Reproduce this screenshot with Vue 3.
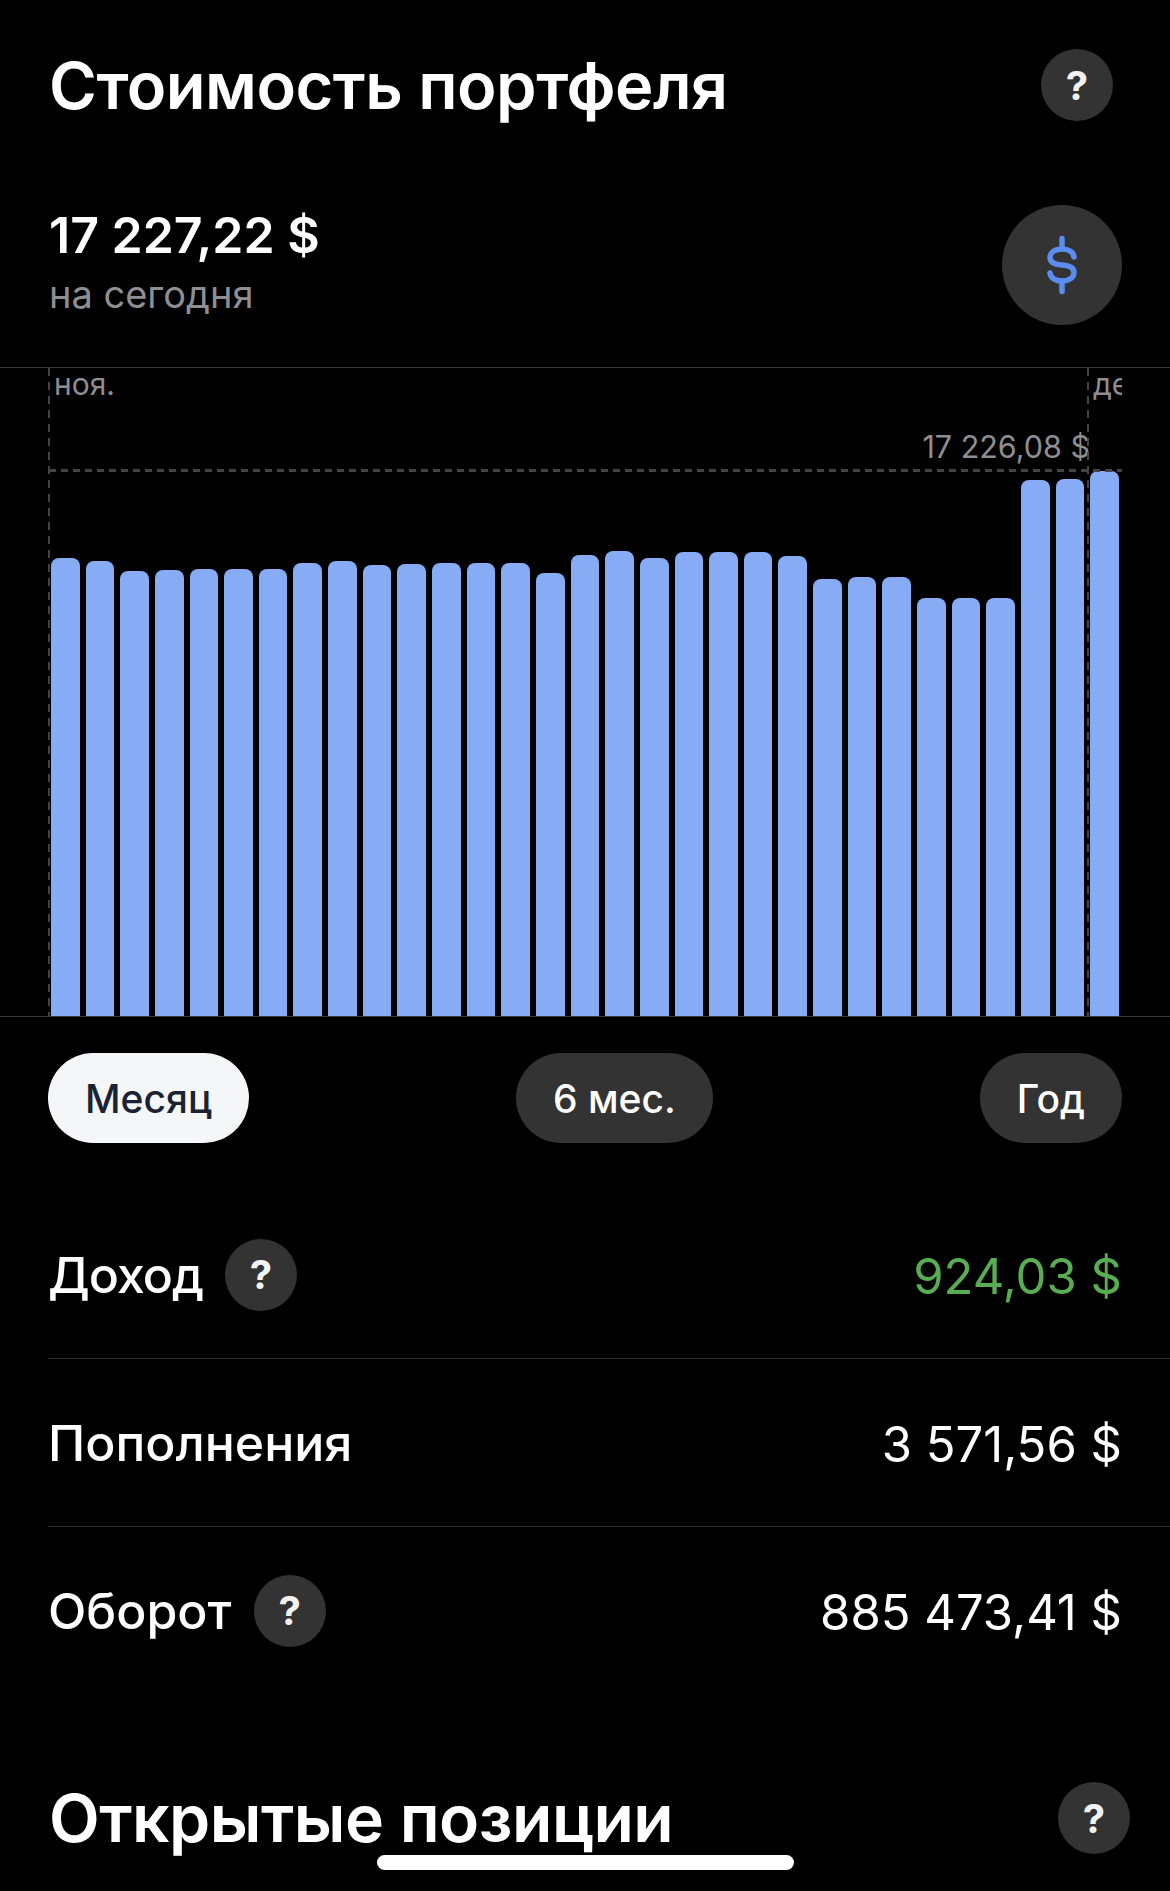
<template>
  <main class="screen">
    <header class="heading">
      <h1>Стоимость портфеля</h1>
      <button class="help">?</button>
    </header>

    <section class="total">
      <div class="total-text">
        <div class="total-value">17 227,22 $</div>
        <div class="total-hint">на сегодня</div>
      </div>
      <div class="currency">
        <svg width="44" height="64" viewBox="0 0 44 64" fill="none" stroke="#5b8def" stroke-width="5.500" stroke-linecap="round">
          <path d="M22 5.500v10M22 48.500v10" />
          <path d="M34 24c-.8-5-5.500-8-12-8-7 0-12 3.500-12 8.500 0 5.500 5 7 12 7.500 7 .5 12 2 12 7.500 0 5-5 8.500-12 8.500-6.500 0-11.200-3-12-8" />
        </svg>
      </div>
    </section>

    <section class="chart">
      <div class="month month-nov">ноя.</div>
      <div class="month month-dec">дек.</div>
      <div class="last-price">17 226,08 $</div>
      <div class="bars">
        <div v-for="(top, i) in barTops" :key="i" class="bar" :style="{ height: 1016 - top + 'px' }"></div>
      </div>
      <div class="guide-v guide-nov"></div>
      <div class="guide-v guide-dec"></div>
      <div class="guide-h"></div>
    </section>

    <nav class="periods">
      <button v-for="period in periods" :key="period" class="period" :class="{ active: period === 'Месяц' }">{{ period }}</button>
    </nav>

    <ul class="stats">
      <li v-for="row in stats" :key="row.label">
        <div class="stat-label">
          <span>{{ row.label }}</span>
          <button v-if="row.help" class="help">?</button>
        </div>
        <div class="stat-value" :class="{ income: row.income }">{{ row.value }}</div>
      </li>
    </ul>

    <header class="heading positions">
      <h1>Открытые позиции</h1>
      <button class="help">?</button>
    </header>

    <div class="home-indicator"></div>
  </main>
</template>

<script setup>
const barTops = [
  558, 561, 571, 570, 569, 569, 569, 563, 561, 565, 564, 563, 563, 563, 573, 555,
  551, 558, 552, 552, 552, 556, 579, 577, 577, 598, 598, 598, 480, 479, 471
]

const periods = ['Месяц', '6 мес.', 'Год']

const stats = [
  { label: 'Доход', value: '924,03 $', help: true, income: true },
  { label: 'Пополнения', value: '3 571,56 $' },
  { label: 'Оборот', value: '885 473,41 $', help: true }
]
</script>

<style>
html,
body {
  background: #000;
}
</style>

<style scoped>
.screen {
  position: relative;
  height: 1891px;
  overflow: hidden;
  background: #000;
  color: #fff;
  font-family: Inter, "Liberation Sans", sans-serif;
}

.heading {
  display: flex;
  align-items: center;
  justify-content: space-between;
  height: 72px;
  padding: 49px 57px 0 49px;
}

.heading h1 {
  margin: 0;
  font-size: 65px;
  font-weight: 600;
  letter-spacing: -0.5px;
}

.help {
  display: flex;
  align-items: center;
  justify-content: center;
  width: 72px;
  height: 72px;
  flex: none;
  padding: 0;
  border: 0;
  border-radius: 50%;
  background: #333;
  color: #f2f2f2;
  font-family: inherit;
  font-size: 40px;
  font-weight: 700;
}

.total {
  display: flex;
  align-items: center;
  justify-content: space-between;
  height: 120px;
  margin-top: 84px;
  padding: 0 48px 0 49px;
}

.total-text {
  padding-bottom: 8px;
}

.total-value {
  font-size: 50px;
  font-weight: 600;
  line-height: 58px;
}

.total-hint {
  margin-top: 8px;
  font-size: 38px;
  line-height: 44px;
  color: #8e8e93;
}

.currency {
  display: flex;
  align-items: center;
  justify-content: center;
  width: 120px;
  height: 120px;
  border-radius: 50%;
  background: #333;
}

.chart {
  position: relative;
  height: 648px;
  margin-top: 42px;
  border-top: 1px solid #3a3a3c;
  border-bottom: 1px solid #3a3a3c;
  overflow: hidden;
}

.month {
  position: absolute;
  top: -2px;
  font-size: 30px;
  line-height: 36px;
  color: #8e8e93;
}

.month-nov {
  left: 54px;
}

.month-dec {
  left: 1093px;
  width: 29px;
  overflow: hidden;
}

.last-price {
  position: absolute;
  top: 60px;
  right: 80px;
  font-size: 30.500px;
  line-height: 38px;
  color: #8e8e93;
}

.guide-v {
  position: absolute;
  top: 0;
  bottom: 0;
  width: 2px;
  background: repeating-linear-gradient(to bottom, #444 0 8px, transparent 8px 14px);
}

.guide-nov {
  left: 48px;
}

.guide-dec {
  left: 1087px;
}

.guide-h {
  position: absolute;
  top: 101px;
  left: 49px;
  width: 1073px;
  height: 3px;
  background: repeating-linear-gradient(to right, #444 0 7px, transparent 7px 12px);
}

.bars {
  position: absolute;
  left: 51px;
  right: 51px;
  bottom: 0;
  display: flex;
  align-items: flex-end;
  gap: 6px;
}

.bar {
  flex: 1;
  border-radius: 8px 8px 0 0;
  background: #87abf5;
}

.periods {
  display: flex;
  justify-content: space-between;
  margin-top: 36px;
  padding: 0 48px;
}

.period {
  height: 90px;
  padding: 0 37px;
  border: 0;
  border-radius: 45px;
  background: #333;
  color: #fff;
  font-family: inherit;
  font-size: 39px;
  font-weight: 500;
}

.period.active {
  background: #f4f6f8;
  color: #1a2233;
}

.stats {
  list-style: none;
  margin: 48px 0 0;
  padding: 0 0 0 48px;
}

.stats li {
  display: flex;
  align-items: center;
  justify-content: space-between;
  height: 167px;
  padding-right: 48px;
  border-bottom: 1px solid #333;
}

.stats li:first-child .stat-label span {
  letter-spacing: -1px;
}

.stats li:last-child {
  border-bottom: 0;
}

.stat-label {
  display: flex;
  align-items: center;
  gap: 22px;
  font-size: 50px;
  font-weight: 500;
}

.stat-value {
  padding-top: 3px;
  font-size: 49px;
}

.income {
  color: #58ac52;
}

.positions {
  margin-top: 88px;
  padding-top: 0;
  padding-right: 40px;
}

.positions h1 {
  font-size: 66px;
}

.home-indicator {
  position: absolute;
  left: 377px;
  top: 1855px;
  width: 417px;
  height: 15px;
  border-radius: 8px;
  background: #fff;
}
</style>
